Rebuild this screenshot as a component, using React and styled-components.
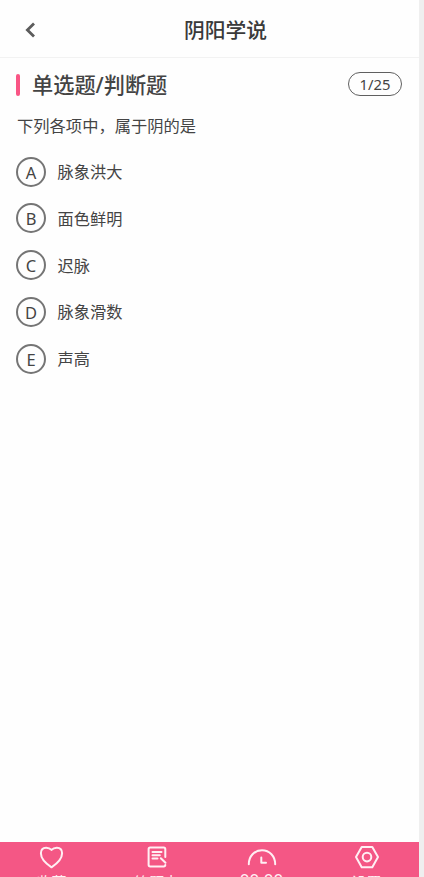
import styled, { createGlobalStyle } from "styled-components";

const GlobalStyle = createGlobalStyle`
  * {
    box-sizing: border-box;
  }

  body {
    margin: 0;
    background-color: #efefef;
    font-family: "Noto Sans", "Noto Sans CJK SC", sans-serif;
    color: #444;
    overflow: hidden;
  }
`;

const Page = styled.div`
  display: flex;
  flex-direction: column;
  width: 419px;
  height: 877px;
  overflow: hidden;
  background-color: #fefefe;
`;

const Header = styled.header`
  display: grid;
  grid-template-columns: 32px 1fr;
  align-items: center;
  flex: none;
  height: 58px;
  padding: 3px 16px 0;
  border-bottom: 1px solid #f2f2f2;
`;

const BackButton = styled.button`
  display: flex;
  padding: 0 0 0 9px;
  border: 0;
  background: none;
`;

const Title = styled.h1`
  margin: 0;
  font-weight: 500;
  font-size: 20.8px;
  line-height: 30px;
  text-align: center;
  color: #3a3a3a;
`;

const Content = styled.main`
  flex: 1;
  padding: 11px 17px 0 16px;
`;

const SectionBar = styled.div`
  display: flex;
  align-items: center;
  height: 32px;
`;

const Marker = styled.span`
  width: 4px;
  height: 22px;
  margin-right: 12px;
  border-radius: 2px;
  background-color: #f95585;
`;

const SectionTitle = styled.h2`
  flex: 1;
  margin: 0;
  font-weight: 500;
  font-size: 21.2px;
  line-height: 30px;
`;

const Counter = styled.span`
  width: 54px;
  height: 24px;
  margin-bottom: 3px;
  border: 1.5px solid #606060;
  border-radius: 12px;
  font-size: 14.8px;
  line-height: 22px;
  text-align: center;
`;

const Question = styled.p`
  margin: 13px 0 18.6px 1px;
  font-size: 16.3px;
  line-height: 24px;
`;

const Options = styled.div`
  display: flex;
  flex-direction: column;
  gap: 16.8px;
`;

const Option = styled.div`
  display: flex;
  align-items: center;
  gap: 11.6px;
  height: 30px;
  font-size: 16.2px;
  line-height: 30px;
`;

const Letter = styled.span`
  width: 30px;
  height: 30px;
  border: 2px solid #757575;
  border-radius: 50%;
  font-size: 16.5px;
  line-height: 27px;
  text-align: center;
`;

const OptionText = styled.span`
  padding-top: 1px;
`;

const TabBar = styled.nav`
  display: grid;
  grid-template-columns: repeat(4, 105px);
  flex: none;
  height: 35px;
  margin-left: -1px;
  overflow: hidden;
  background-color: #f45785;
`;

const Tab = styled.div`
  display: flex;
  flex-direction: column;
  align-items: center;
  padding-top: 3px;
  color: #fff0f4;

  svg {
    flex: none;
  }
`;

const TabLabel = styled.span`
  margin-top: ${(props) => (props.$timer ? "-2px" : "0")};
  font-size: ${(props) => (props.$timer ? "17px" : "15px")};
  line-height: 24px;
  white-space: nowrap;
`;

const TabIcon = ({ children }) => (
  <svg
    width="30"
    height="25"
    viewBox="0 0 30 25"
    fill="none"
    stroke="currentColor"
    strokeWidth="2"
    strokeLinecap="round"
    strokeLinejoin="round"
  >
    {children}
  </svg>
);

const tabs = [
  {
    label: "收藏",
    icon: (
      <path d="M14.5 22.3C11 20 3.9 14.4 3.9 8.3C3.9 4.8 6.1 2.7 9.1 2.7C11.5 2.7 13.5 3.8 14.5 4.9C15.5 3.8 17.5 2.7 19.9 2.7C22.9 2.7 25.1 4.8 25.1 8.3C25.1 14.4 18 20 14.5 22.3Z" />
    ),
  },
  {
    label: "答题卡",
    icon: (
      <>
        <path d="M23.3 12V4.2Q23.3 2.6 21.7 2.6H8.2Q6.6 2.6 6.6 4.2V19.8Q6.6 21.4 8.2 21.4H21.7Q23.3 21.4 23.3 20" />
        <path d="M10.5 7H19.5M10.5 10.3H17.8M10.5 13.6H15.5M18.8 13.2L23.5 17.8" />
      </>
    ),
  },
  {
    label: "00:00",
    timer: true,
    icon: <path d="M1.8 19.2C1.8 11.3 7.4 5.2 15 5.2S28.2 11.3 28.2 19.2M14.3 12.4V17.8H19" />,
  },
  {
    label: "设置",
    icon: (
      <>
        <path d="M9.7 1.9H20.3L26 12L20.3 22.2H9.7L4 12Z" />
        <circle cx="15" cy="12.1" r="4.3" />
      </>
    ),
  },
];

const options = [
  { key: "A", text: "脉象洪大" },
  { key: "B", text: "面色鲜明" },
  { key: "C", text: "迟脉" },
  { key: "D", text: "脉象滑数" },
  { key: "E", text: "声高" },
];

export default function App() {
  return (
    <>
      <GlobalStyle />
      <Page>
        <Header>
          <BackButton aria-label="返回">
            <svg width="11" height="16" viewBox="0 0 11 16" fill="none" stroke="#5c5c5c" strokeWidth="2.8">
              <path d="M9 1.5L2.4 8L9 14.5" />
            </svg>
          </BackButton>
          <Title>阴阳学说</Title>
        </Header>

        <Content>
          <SectionBar>
            <Marker />
            <SectionTitle>单选题/判断题</SectionTitle>
            <Counter>1/25</Counter>
          </SectionBar>

          <Question>下列各项中，属于阴的是</Question>

          <Options>
            {options.map(({ key, text }) => (
              <Option key={key}>
                <Letter>{key}</Letter>
                <OptionText>{text}</OptionText>
              </Option>
            ))}
          </Options>
        </Content>

        <TabBar>
          {tabs.map(({ label, icon, timer }) => (
            <Tab key={label}>
              <TabIcon>{icon}</TabIcon>
              <TabLabel $timer={timer}>{label}</TabLabel>
            </Tab>
          ))}
        </TabBar>
      </Page>
    </>
  );
}
